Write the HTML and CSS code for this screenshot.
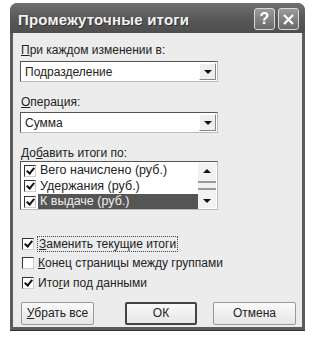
FILE: index.html
```html
<!DOCTYPE html>
<html lang="ru">

<head>
    <meta charset="UTF-8">
    <title>Промежуточные итоги</title>
    <link rel="stylesheet" href="styles.css">
</head>

<body>

    <div class="dialog">
        <div class="titlebar">
            <span class="title">Промежуточные итоги</span>
            <span class="tb-btn">?</span>
            <span class="tb-btn">
                <svg width="13" height="13" viewBox="0 0 13 13">
                    <path d="M2 2 L11 11 M11 2 L2 11" stroke="#fff" stroke-width="2.2" />
                </svg>
            </span>
        </div>

        <div class="body">
            <div class="lbl"><u>П</u>ри каждом изменении в:</div>
            <div class="combo">
                <span class="combo-text">Подразделение</span>
                <span class="drop"><span class="arrow-down"></span></span>
            </div>

            <div class="lbl lbl-gap"><u>О</u>перация:</div>
            <div class="combo">
                <span class="combo-text">Сумма</span>
                <span class="drop"><span class="arrow-down"></span></span>
            </div>

            <div class="lbl lbl-gap lbl-list">До<u>б</u>авить итоги по:</div>
            <div class="listbox">
                <div class="rows">
                    <div class="row"><span class="box checked"></span><span class="row-text">Вего начислено (руб.)</span></div>
                    <div class="row"><span class="box checked"></span><span class="row-text">Удержания (руб.)</span></div>
                    <div class="row"><span class="box checked"></span><span class="row-text selected">К выдаче (руб.)</span></div>
                </div>
                <div class="scrollbar">
                    <span class="sb-btn"><span class="arrow-up"></span></span>
                    <span class="thumb"></span>
                    <span class="sb-btn"><span class="arrow-down"></span></span>
                </div>
            </div>

            <div class="checks">
                <div class="check"><span class="box checked"></span><span class="focus"><u>З</u>аменить текущие итоги</span></div>
                <div class="check"><span class="box"></span><span><u>К</u>онец страницы между группами</span></div>
                <div class="check"><span class="box checked"></span><span>Ито<u>г</u>и под данными</span></div>
            </div>

            <div class="buttons">
                <span class="btn btn-remove"><u>У</u>брать все</span>
                <span class="btn btn-ok">ОК</span>
                <span class="btn btn-cancel">Отмена</span>
            </div>
        </div>
    </div>

</body>

</html>
```

FILE: styles.css
```css
/* Basic Reset */
* {
    margin: 0;
    padding: 0;
    box-sizing: border-box;
}

body {
    background-color: #fff;
    font-family: "Liberation Sans", Arial, sans-serif;
    font-size: 12px;
    color: #222;
}

/* Window frame */
.dialog {
    width: 295px;
    margin: 3px 0 0 10px;
    background-color: #5c5c5c;
    border-radius: 8px 8px 0 0;
    padding: 0 3px 3px 3px;
    border-bottom: 1px solid #333;
}

.titlebar {
    display: flex;
    align-items: center;
    height: 30px;
    margin: 0 -3px;
    padding: 2px 6px 0 8px;
    background: linear-gradient(#707070, #575757 55%, #4e4e4e);
    border-radius: 7px 7px 0 0;
}

.title {
    flex: 1;
    color: #f2f2f2;
    font-weight: bold;
    font-size: 15px;
    letter-spacing: 0.2px;
    text-shadow: 1px 1px 0 #333;
}

.tb-btn {
    display: flex;
    align-items: center;
    justify-content: center;
    width: 21px;
    height: 22px;
    margin-left: 3px;
    border: 1px solid #d8d8d8;
    border-radius: 3px;
    background: linear-gradient(#9a9a9a, #6a6a6a);
    color: #fff;
    font-weight: bold;
    font-size: 16px;
}

/* Dialog body */
.body {
    background-color: #ececec;
    padding: 10px 0 2px 7px;
}

.lbl {
    height: 14px;
    line-height: 14px;
    margin-bottom: 4px;
    margin-left: 1px;
}

.lbl-gap {
    margin-top: 13px;
    margin-bottom: 3px;
}

.lbl-list {
    margin-bottom: 1px;
}

.combo {
    display: flex;
    align-items: center;
    width: 198px;
    height: 21px;
    background-color: #fff;
    border: 1px solid;
    border-color: #555 #bbb #bbb #555;
    padding: 1px;
}

.combo-text {
    flex: 1;
    padding-left: 3px;
}

.drop {
    display: flex;
    align-items: center;
    justify-content: center;
    width: 17px;
    height: 17px;
    background-color: #eee;
    border: 1px solid;
    border-color: #fff #888 #888 #fff;
}

.arrow-down {
    width: 0;
    height: 0;
    border-left: 4px solid transparent;
    border-right: 4px solid transparent;
    border-top: 4px solid #111;
}

.arrow-up {
    width: 0;
    height: 0;
    border-left: 4px solid transparent;
    border-right: 4px solid transparent;
    border-bottom: 4px solid #111;
}

/* List of columns */
.listbox {
    display: flex;
    width: 198px;
    height: 49px;
    background-color: #fff;
    border: 1px solid;
    border-color: #555 #bbb #bbb #555;
    padding: 1px;
}

.rows {
    flex: 1;
}

.row {
    display: flex;
    align-items: center;
    height: 15.5px;
    padding-left: 2px;
}

.row-text {
    flex: 1;
    height: 15px;
    line-height: 15px;
    padding-left: 2px;
    margin-left: 2px;
    font-size: 12.5px;
}

.row-text.selected {
    background-color: #555;
    color: #eee;
}

.box {
    display: inline-block;
    position: relative;
    width: 12px;
    height: 12px;
    background-color: #fff;
    border: 1px solid;
    border-color: #333 #ccc #ccc #333;
}

.box.checked::after {
    content: "";
    position: absolute;
    left: 3px;
    top: 0px;
    width: 3px;
    height: 6px;
    border: solid #111;
    border-width: 0 2px 2px 0;
    transform: rotate(40deg);
}

.scrollbar {
    display: flex;
    flex-direction: column;
    justify-content: space-between;
    width: 18px;
    background-color: #f2f2f2;
}

.sb-btn {
    display: flex;
    align-items: center;
    justify-content: center;
    height: 15px;
}

.thumb {
    height: 9px;
    border-top: 2px solid #999;
    border-bottom: 2px solid #999;
}

/* Options */
.checks {
    margin-top: 24px;
    margin-left: 2px;
}

.check {
    display: flex;
    align-items: center;
    gap: 4px;
    height: 19.5px;
}

.focus {
    outline: 1px dotted #444;
    padding: 0 1px;
}

/* Buttons */
.buttons {
    display: flex;
    margin-top: 9px;
    height: 23px;
}

.btn {
    display: flex;
    align-items: center;
    justify-content: center;
    height: 23px;
    background: linear-gradient(#fafafa, #e6e6e6);
    border: 1px solid #999;
    border-radius: 2px;
}

.btn-remove {
    width: 73px;
    margin-left: 1px;
}

.btn-ok {
    width: 72px;
    margin-left: 31px;
    border: 2px solid #444;
}

.btn-cancel {
    width: 83px;
    margin-left: 16px;
}
```
